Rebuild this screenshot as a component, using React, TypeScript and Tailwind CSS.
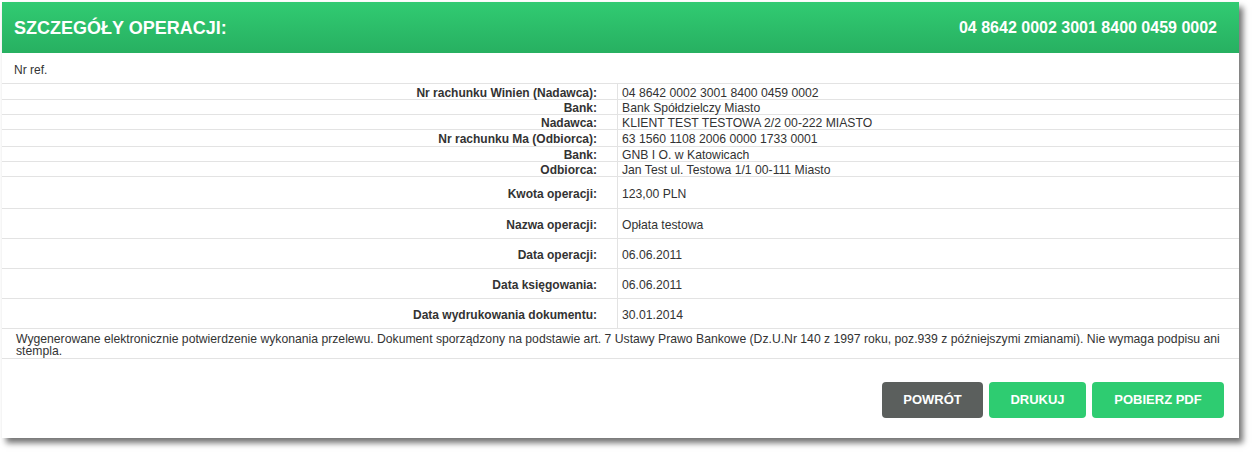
import React from 'react'

type Row = { label: string; value: string; h: string }

const compactRows: Row[] = [
  { label: 'Nr rachunku Winien (Nadawca):', value: '04 8642 0002 3001 8400 0459 0002', h: 'h-[16px]' },
  { label: 'Bank:', value: 'Bank Spółdzielczy Miasto', h: 'h-[15px]' },
  { label: 'Nadawca:', value: 'KLIENT TEST TESTOWA 2/2 00-222 MIASTO', h: 'h-[15px]' },
  { label: 'Nr rachunku Ma (Odbiorca):', value: '63 1560 1108 2006 0000 1733 0001', h: 'h-[17px]' },
  { label: 'Bank:', value: 'GNB I O. w Katowicach', h: 'h-[15px]' },
  { label: 'Odbiorca:', value: 'Jan Test ul. Testowa 1/1 00-111 Miasto', h: 'h-[15px]' },
]

const wideRows: Row[] = [
  { label: 'Kwota operacji:', value: '123,00 PLN', h: 'h-[32px]' },
  { label: 'Nazwa operacji:', value: 'Opłata testowa', h: 'h-[30px]' },
  { label: 'Data operacji:', value: '06.06.2011', h: 'h-[30px]' },
  { label: 'Data księgowania:', value: '06.06.2011', h: 'h-[30px]' },
  { label: 'Data wydrukowania dokumentu:', value: '30.01.2014', h: 'h-[30px]' },
]

function DetailRow({ row }: { row: Row }) {
  return (
    <div className={`flex border-b border-[#e3e3e3] ${row.h}`}>
      <div className="w-[615px] shrink-0 flex items-center justify-end pr-[20px] pt-[2px] font-bold">
        {row.label}
      </div>
      <div className="flex-1 flex items-center border-l border-[#e3e3e3] pl-[4px] pt-[2px] text-[12.2px]">
        {row.value}
      </div>
    </div>
  )
}

export default function App() {
  return (
    <div className="w-[1253px] h-[453px] bg-white pt-[2px] pl-[2px] font-['Liberation_Sans',Arial,sans-serif]">
      <div className="w-[1237px] h-[436px] bg-white shadow-[4px_5px_6px_rgba(0,0,0,0.55)] flex flex-col text-[12px] leading-[14px] text-[#333]">
        {/* Header */}
        <div className="h-[51px] shrink-0 flex items-center justify-between pl-[12px] pr-[22px] bg-gradient-to-b from-[#31cb72] to-[#27b061] text-white font-bold">
          <span className="text-[18px]">SZCZEGÓŁY OPERACJI:</span>
          <span className="text-[16px]">04 8642 0002 3001 8400 0459 0002</span>
        </div>

        {/* Nr ref */}
        <div className="h-[31px] flex items-center pl-[12px] pt-[3px] border-b border-[#e3e3e3]">
          Nr ref.
        </div>

        {compactRows.map((r, i) => (
          <DetailRow key={'c' + i} row={r} />
        ))}
        {wideRows.map((r, i) => (
          <DetailRow key={'w' + i} row={r} />
        ))}

        {/* Footer note */}
        <div className="h-[30px] border-b border-[#e3e3e3] pl-[14px] pr-[14px] pt-[4px] leading-[12px] text-[12.2px]">
          Wygenerowane elektronicznie potwierdzenie wykonania przelewu. Dokument sporządzony na podstawie art. 7 Ustawy Prawo Bankowe (Dz.U.Nr 140 z 1997 roku, poz.939 z późniejszymi zmianami). Nie wymaga podpisu ani stempla.
        </div>

        {/* Buttons */}
        <div className="flex justify-end gap-[6px] pt-[23px] pr-[15px]">
          <button className="h-[36px] w-[101px] rounded-[4px] bg-[#5b5f5d] text-white font-bold text-[13px]">
            POWRÓT
          </button>
          <button className="h-[36px] w-[97px] rounded-[4px] bg-[#2ecc71] text-white font-bold text-[13px]">
            DRUKUJ
          </button>
          <button className="h-[36px] w-[132px] rounded-[4px] bg-[#2ecc71] text-white font-bold text-[13px]">
            POBIERZ PDF
          </button>
        </div>
      </div>
    </div>
  )
}
